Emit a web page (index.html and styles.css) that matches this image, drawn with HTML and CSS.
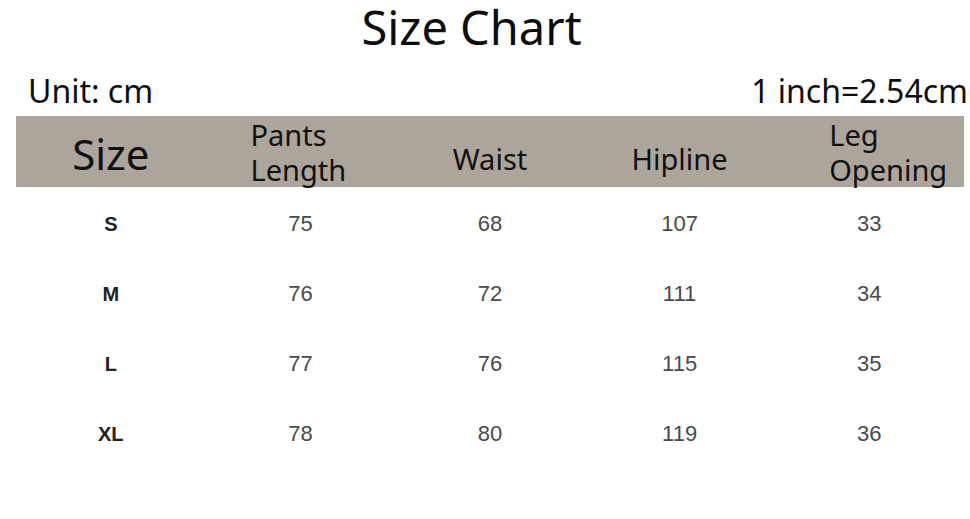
FILE: index.html
```html
<!DOCTYPE html>
<html>
<head>
<meta charset="utf-8">
<link rel="stylesheet" href="styles.css">
</head>
<body>
  <h1 class="title">Size Chart</h1>
  <div class="unit-row">
    <span>Unit: cm</span>
    <span>1 inch=2.54cm</span>
  </div>
  <div class="chart">
    <div class="head">
      <div class="hcell big">Size</div>
      <div class="hcell"><span class="stack">Pants<br>Length</span></div>
      <div class="hcell single">Waist</div>
      <div class="hcell single">Hipline</div>
      <div class="hcell shift"><span class="stack">Leg<br>Opening</span></div>
    </div>
    <div class="body">
      <div class="row"><div class="size">S</div><div class="num">75</div><div class="num">68</div><div class="num">107</div><div class="num">33</div></div>
      <div class="row"><div class="size">M</div><div class="num">76</div><div class="num">72</div><div class="num">111</div><div class="num">34</div></div>
      <div class="row"><div class="size">L</div><div class="num">77</div><div class="num">76</div><div class="num">115</div><div class="num">35</div></div>
      <div class="row"><div class="size">XL</div><div class="num">78</div><div class="num">80</div><div class="num">119</div><div class="num">36</div></div>
    </div>
  </div>
</body>
</html>
```
FILE: styles.css
```css
html, body {
  margin: 0;
  padding: 0;
  background: #ffffff;
}
body {
  font-family: "Noto Sans", "Open Sans", sans-serif;
  color: #111111;
  width: 970px;
  height: 519px;
  overflow: hidden;
}
.title {
  margin: 0;
  padding-right: 27px;
  text-align: center;
  font-size: 47px;
  font-weight: 400;
  line-height: 54px;
  color: #0d0d0d;
}
.unit-row {
  display: flex;
  justify-content: space-between;
  margin-top: 16px;
  padding: 0 2px 0 28px;
  font-size: 32px;
  line-height: 42px;
  color: #0d0d0d;
}
.chart {
  margin: 4px 6px 0 16px;
}
.head {
  display: grid;
  grid-template-columns: repeat(5, 1fr);
  height: 71px;
  background: #aca59c;
}
.hcell {
  display: flex;
  align-items: center;
  justify-content: center;
  font-size: 29px;
  line-height: 35px;
  color: #111111;
}
.hcell.single {
  padding-top: 13px;
}
.hcell.big {
  font-size: 42px;
  line-height: 57px;
  padding-top: 4px;
}
.hcell.shift {
  padding-left: 42px;
}
.stack {
  display: block;
  text-align: left;
  margin-left: -4px;
}
.body {
  margin-top: 2px;
}
.row {
  display: grid;
  grid-template-columns: repeat(5, 1fr);
  height: 70px;
  align-items: center;
  justify-items: center;
  font-family: "Liberation Sans", Arial, sans-serif;
}
.size {
  font-size: 20px;
  font-weight: 700;
  color: #222222;
}
.num {
  font-size: 22px;
  color: #4a4a4a;
}
```
